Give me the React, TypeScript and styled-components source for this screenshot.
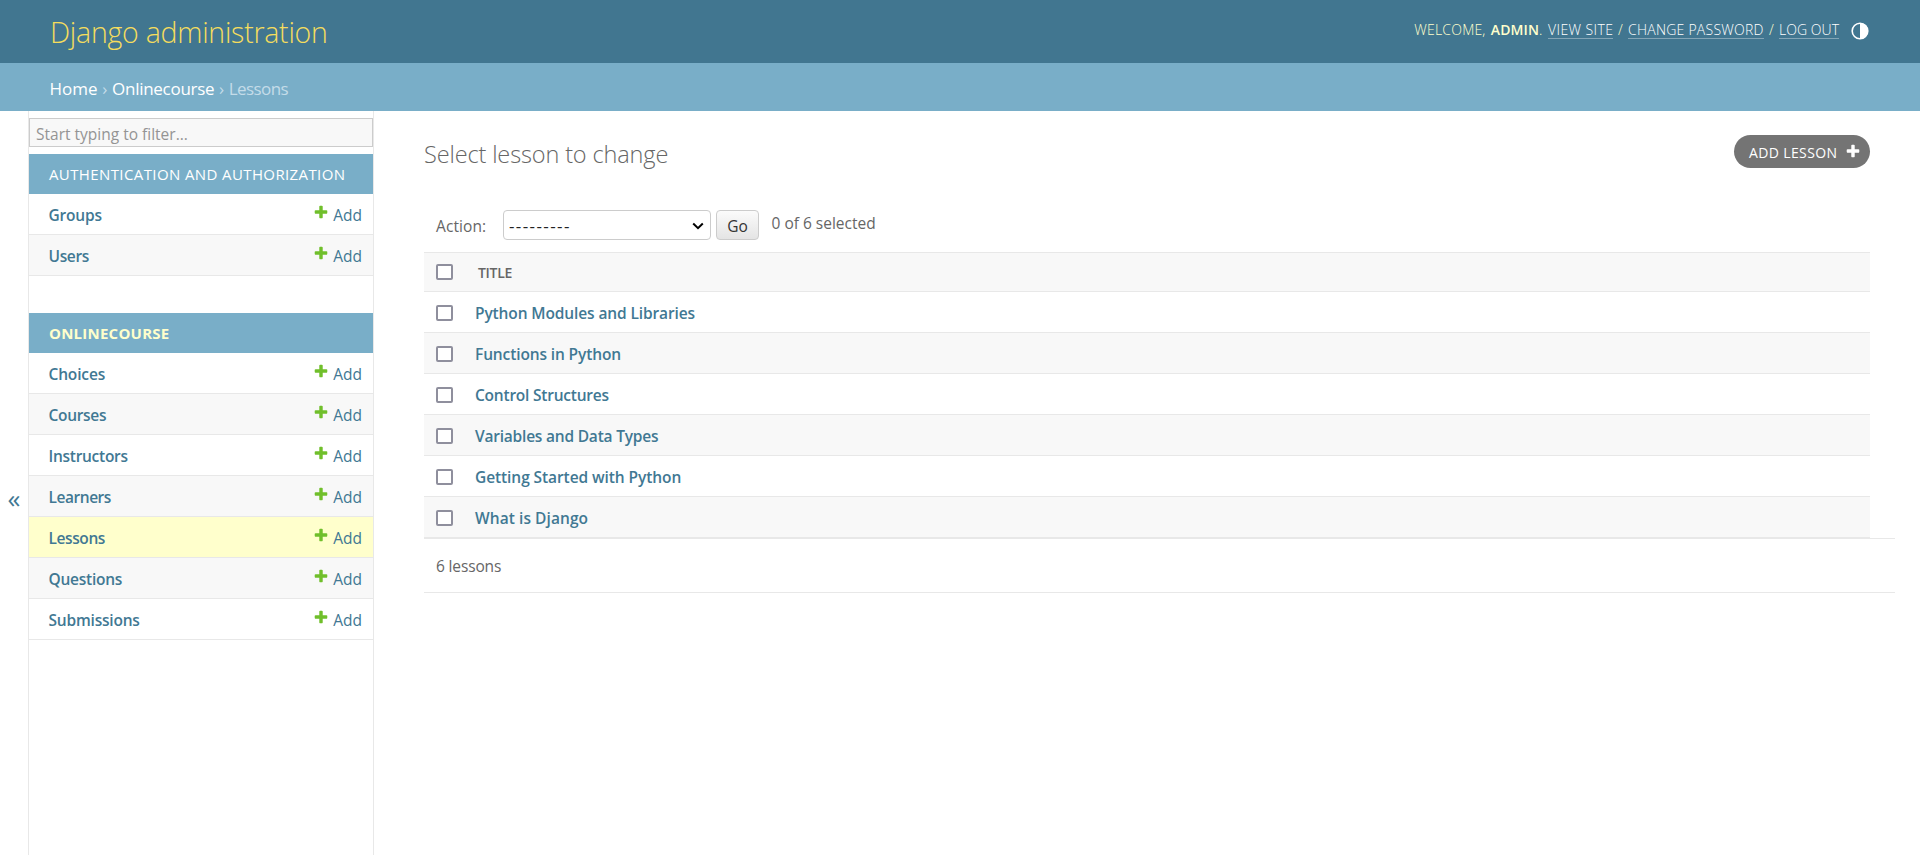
import React from 'react';
import styled, { createGlobalStyle } from 'styled-components';

const GlobalStyle = createGlobalStyle`
  * { box-sizing: border-box; }
  body {
    margin: 0;
    background: #fff;
    color: #666;
    font-family: 'Open Sans', 'Noto Sans', sans-serif;
    font-size: 15.5px;
  }
  a { text-decoration: none; color: #417893; }
`;

const Page = styled.div`
  display: flex;
  flex-direction: column;
  height: 855px;
  overflow: hidden;
`;

const Header = styled.header`
  display: flex;
  justify-content: space-between;
  align-items: flex-start;
  flex: none;
  height: 63px;
  padding: 0 50px;
  background: #417690;
`;

const SiteName = styled.h1`
  margin: 0;
  line-height: 64px;
  font-size: 28.5px;
  font-weight: 300;
  letter-spacing: -0.25px;
  color: #f5dd5d;
`;

const UserTools = styled.nav`
  display: flex;
  align-items: flex-start;
  padding-top: 20px;
  font-size: 14px;
  font-weight: 300;
  line-height: 20px;
  color: #ffc;
  white-space: pre;
`;

const Welcome = styled.span`
  width: 76.5px;
  letter-spacing: 0.2px;
`;

const UserName = styled.strong`
  font-weight: 600;
  letter-spacing: 0.1px;
`;

const Dot = styled.span`
  width: 9px;
`;

const ToolLink = styled.a<{ $width: number; $spacing: number }>`
  width: ${(p) => p.$width}px;
  height: 19px;
  border-bottom: 1px solid rgba(255, 255, 255, 0.35);
  letter-spacing: ${(p) => p.$spacing}px;
  color: #fff;
`;

const Slash = styled.span`
  width: 15px;
  text-align: center;
`;

const ThemeIcon = styled.svg`
  width: 18px;
  height: 18px;
  margin: 2px 1px 0 12px;
`;

const Breadcrumbs = styled.nav`
  display: flex;
  flex: none;
  height: 48px;
  padding: 3px 50px 0 49.5px;
  line-height: 45px;
  font-size: 17px;
  background: #79aec8;
  color: #c4dce8;
`;

const Crumb = styled.span<{ $spacing: number; $link?: boolean }>`
  letter-spacing: ${(p) => p.$spacing}px;
  color: ${(p) => (p.$link ? '#fff' : '#c4dce8')};
`;

const Separator = styled.span`
  width: 14.5px;
  text-align: center;
`;

const Body = styled.div`
  display: flex;
  flex: 1;
  min-height: 0;
`;

const SidebarToggle = styled.button`
  width: 29px;
  padding: 0;
  border: 0;
  border-right: 1px solid #e8e8e8;
  background: #fff;
  font-family: inherit;
  font-size: 26px;
  color: #417893;
`;

const ToggleGlyph = styled.span`
  display: block;
  margin-top: 29px;
`;

const Sidebar = styled.aside`
  flex: none;
  width: 345px;
  padding-top: 7px;
  border-right: 1px solid #e8e8e8;
`;

const Filter = styled.input`
  display: block;
  width: 344px;
  height: 29px;
  margin: 0 0 7px;
  padding: 3px 6px 0;
  border: 1px solid #ccc;
  border-radius: 0;
  background: #f8f8f8;
  font: inherit;
  &::placeholder { color: #949494; opacity: 1; }
`;

const AppModule = styled.section`
  margin-bottom: 37px;
`;

const Caption = styled.h2<{ $current?: boolean }>`
  margin: 0;
  height: 40px;
  padding-left: 20px;
  line-height: 40px;
  font-size: 15px;
  font-weight: ${(p) => (p.$current ? 700 : 400)};
  letter-spacing: ${(p) => (p.$current ? 0.24 : 0.39)}px;
  background: #79aec8;
  color: ${(p) => (p.$current ? '#ffc' : '#fff')};
`;

const ModelRow = styled.div<{ $shade?: boolean; $current?: boolean }>`
  display: flex;
  height: 41px;
  padding: 3px 11px 0 20px;
  border-bottom: 1px solid #e8e8e8;
  line-height: 37px;
  background: ${(p) => (p.$current ? '#ffc' : p.$shade ? '#f8f8f8' : '#fff')};
`;

const ModelLink = styled.a<{ $spacing: number }>`
  flex: 1;
  margin-left: -0.5px;
  font-weight: 600;
  letter-spacing: ${(p) => p.$spacing}px;
`;

const AddLink = styled.a`
  display: flex;
  gap: 4px;
`;

const PlusSvg = styled.svg`
  flex: none;
  width: 16px;
  height: 16px;
`;

const RowPlus = styled(PlusSvg)`
  margin-top: 7px;
`;

const Main = styled.main`
  flex: 1;
  padding: 24px 25px 0 50px;
`;

const TitleBar = styled.div`
  display: flex;
  justify-content: space-between;
  height: 69px;
  padding-right: 25px;
`;

const Title = styled.h2`
  margin: 0;
  line-height: 39px;
  font-size: 23.5px;
  font-weight: 300;
  letter-spacing: -0.13px;
`;

const AddButton = styled.a`
  display: flex;
  justify-content: space-between;
  width: 136px;
  height: 33px;
  padding: 1px 9px 0 15px;
  border-radius: 17px;
  background: #747474;
  line-height: 34px;
  font-size: 14px;
  letter-spacing: 0.37px;
  color: #fff;
`;

const ButtonPlus = styled(PlusSvg)`
  margin-top: 7px;
`;

const Actions = styled.div`
  display: flex;
  height: 48px;
  padding: 6px 12px 0;
`;

const ActionLabel = styled.label`
  width: 67px;
  padding-top: 1px;
  line-height: 30px;
  letter-spacing: 0.1px;
`;

const ActionSelect = styled.div`
  display: flex;
  justify-content: space-between;
  align-items: center;
  width: 208px;
  height: 30px;
  padding: 0 6px 0 5px;
  border: 1px solid #ccc;
  border-radius: 4px;
  font-size: 17px;
  color: #222;
  letter-spacing: 1.4px;
`;

const Chevron = styled.svg`
  width: 12px;
  height: 8px;
  margin-top: 1px;
`;

const GoButton = styled.button`
  width: 43px;
  height: 30px;
  margin: 0 13px 0 5px;
  padding: 2px 0 0;
  border: 1px solid #ccc;
  border-radius: 4px;
  background: linear-gradient(#fbfbfb, #e4e4e4);
  font: inherit;
  line-height: 24px;
  color: #333;
`;

const Counter = styled.span`
  line-height: 26px;
  margin-left: -0.5px;
`;

const Results = styled.div`
  margin-right: 25px;
  border-top: 1px solid #e8e8e8;
`;

const ResultRow = styled.div<{ $shade?: boolean; $head?: boolean }>`
  display: flex;
  height: ${(p) => (p.$head ? 39 : 41)}px;
  padding-left: 12px;
  border-bottom: 1px solid #e8e8e8;
  background: ${(p) => (p.$shade ? '#f8f8f8' : '#fff')};
`;

const Check = styled.input<{ $top: number }>`
  appearance: none;
  flex: none;
  width: 17px;
  height: 16px;
  margin: ${(p) => p.$top}px 22px 0 0;
  border: 2px solid #8f8f9d;
  border-radius: 2px;
  background: #fff;
`;

const HeadText = styled.span`
  padding: 1px 0 0 3px;
  line-height: 38px;
  font-size: 14px;
  font-weight: 600;
  letter-spacing: -0.3px;
`;

const LessonLink = styled.a<{ $spacing: number }>`
  padding-top: 2px;
  line-height: 39px;
  font-weight: 600;
  letter-spacing: ${(p) => p.$spacing}px;
`;

const Paginator = styled.p`
  margin: 0;
  height: 55px;
  padding: 1px 12px 0;
  border: solid #e8e8e8;
  border-width: 1px 0;
  line-height: 53px;
  letter-spacing: -0.15px;
`;

const plusPath =
  'M1600 796v192q0 40-28 68t-68 28h-416v416q0 40-28 68t-68 28h-192q-40 0-68-28t-28-68v-416h-416q-40 0-68-28t-28-68v-192q0-40 28-68t68-28h416v-416q0-40 28-68t68-28h192q40 0 68 28t28 68v416h416q40 0 68 28t28 68z';

type Item = { name: string; spacing: number };

const authModels: Item[] = [
  { name: 'Groups', spacing: -0.2 },
  { name: 'Users', spacing: -0.35 },
];

const courseModels: Item[] = [
  { name: 'Choices', spacing: -0.15 },
  { name: 'Courses', spacing: -0.3 },
  { name: 'Instructors', spacing: -0.28 },
  { name: 'Learners', spacing: -0.45 },
  { name: 'Lessons', spacing: -0.4 },
  { name: 'Questions', spacing: -0.25 },
  { name: 'Submissions', spacing: -0.2 },
];

const lessons: Item[] = [
  { name: 'Python Modules and Libraries', spacing: -0.12 },
  { name: 'Functions in Python', spacing: -0.12 },
  { name: 'Control Structures', spacing: -0.22 },
  { name: 'Variables and Data Types', spacing: -0.21 },
  { name: 'Getting Started with Python', spacing: -0.08 },
  { name: 'What is Django', spacing: 0.07 },
];

function ModelList({ items, current }: { items: Item[]; current?: string }) {
  return (
    <>
      {items.map((m, i) => (
        <ModelRow key={m.name} $shade={i % 2 === 1} $current={m.name === current}>
          <ModelLink href="#" $spacing={m.spacing}>{m.name}</ModelLink>
          <AddLink href="#">
            <RowPlus viewBox="0 0 1792 1792"><path fill="#70bf2b" d={plusPath} /></RowPlus>
            Add
          </AddLink>
        </ModelRow>
      ))}
    </>
  );
}

export default function App() {
  return (
    <Page>
      <GlobalStyle />
      <Header>
        <SiteName>Django administration</SiteName>
        <UserTools>
          <Welcome>WELCOME,</Welcome>
          <UserName>ADMIN</UserName>
          <Dot>.</Dot>
          <ToolLink href="#" $width={65} $spacing={0.4}>VIEW SITE</ToolLink>
          <Slash>/</Slash>
          <ToolLink href="#" $width={136} $spacing={0.24}>CHANGE PASSWORD</ToolLink>
          <Slash>/</Slash>
          <ToolLink href="#" $width={60} $spacing={0.05}>LOG OUT</ToolLink>
          <ThemeIcon viewBox="0 0 18 18">
            <circle cx="9" cy="9" r="7.8" fill="none" stroke="#fff" strokeWidth="1.6" />
            <path d="M9 1a8 8 0 0 1 0 16z" fill="#fff" />
          </ThemeIcon>
        </UserTools>
      </Header>
      <Breadcrumbs>
        <Crumb $link $spacing={0}>Home</Crumb>
        <Separator>›</Separator>
        <Crumb $link $spacing={-0.28}>Onlinecourse</Crumb>
        <Separator>›</Separator>
        <Crumb $spacing={-0.6}>Lessons</Crumb>
      </Breadcrumbs>
      <Body>
        <SidebarToggle><ToggleGlyph>«</ToggleGlyph></SidebarToggle>
        <Sidebar>
          <Filter placeholder="Start typing to filter..." />
          <AppModule>
            <Caption>AUTHENTICATION AND AUTHORIZATION</Caption>
            <ModelList items={authModels} />
          </AppModule>
          <AppModule>
            <Caption $current>ONLINECOURSE</Caption>
            <ModelList items={courseModels} current="Lessons" />
          </AppModule>
        </Sidebar>
        <Main>
          <TitleBar>
            <Title>Select lesson to change</Title>
            <AddButton href="#">
              ADD LESSON
              <ButtonPlus viewBox="0 0 1792 1792"><path fill="#fff" d={plusPath} /></ButtonPlus>
            </AddButton>
          </TitleBar>
          <Actions>
            <ActionLabel>Action:</ActionLabel>
            <ActionSelect>
              ---------
              <Chevron viewBox="0 0 12 8">
                <path d="M1.2 1.5L6 6.2l4.8-4.7" fill="none" stroke="#000" strokeWidth="2" />
              </Chevron>
            </ActionSelect>
            <GoButton>Go</GoButton>
            <Counter>0 of 6 selected</Counter>
          </Actions>
          <Results>
            <ResultRow $head $shade>
              <Check type="checkbox" $top={11} />
              <HeadText>TITLE</HeadText>
            </ResultRow>
            {lessons.map((l, i) => (
              <ResultRow key={l.name} $shade={i % 2 === 1}>
                <Check type="checkbox" $top={13} />
                <LessonLink href="#" $spacing={l.spacing}>{l.name}</LessonLink>
              </ResultRow>
            ))}
          </Results>
          <Paginator>6 lessons</Paginator>
        </Main>
      </Body>
    </Page>
  );
}
